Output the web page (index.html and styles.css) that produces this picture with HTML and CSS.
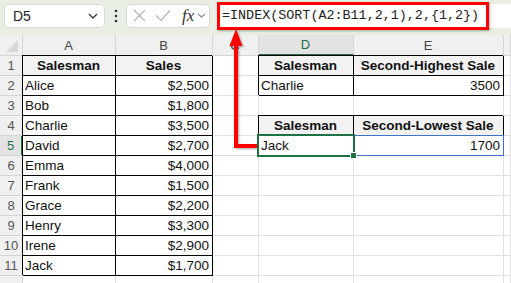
FILE: index.html
```html
<!DOCTYPE html>
<html>
<head>
    <title>Second Highest and Lowest Sale</title>
    <link rel="stylesheet" href="styles.css">
</head>
<body>

<div class="toolbar">
    <div class="name-box">
        <span>D5</span>
        <svg width="10" height="6" viewBox="0 0 10 6"><polyline points="1,1 5,5 9,1" fill="none" stroke="#333" stroke-width="1.3"/></svg>
    </div>
    <svg class="dots" width="4" height="14" viewBox="0 0 4 14"><circle cx="2" cy="2" r="1.3" fill="#333"/><circle cx="2" cy="7" r="1.3" fill="#333"/><circle cx="2" cy="12" r="1.3" fill="#333"/></svg>
    <div class="fx-buttons">
        <svg width="13" height="13" viewBox="0 0 13 13"><path d="M1 1 L12 12 M12 1 L1 12" stroke="#b4b4b4" stroke-width="1.2"/></svg>
        <svg width="16" height="13" viewBox="0 0 16 13"><polyline points="1,6.5 6,11.5 15,1.5" fill="none" stroke="#b4b4b4" stroke-width="1.2"/></svg>
        <span class="fx">fx</span>
        <svg width="9" height="5" viewBox="0 0 9 5"><polyline points="1,1 4.5,4 8,1" fill="none" stroke="#888" stroke-width="1.1"/></svg>
    </div>
    <div class="formula-bar">
        <div class="formula">=INDEX(SORT(A2:B11,2,1),2,{1,2})</div>
    </div>
</div>

<div class="sheet">
    <div class="row head">
        <div class="c corner"></div>
        <div class="c ch">A</div>
        <div class="c ch">B</div>
        <div class="c ch">C</div>
        <div class="c ch sel">D</div>
        <div class="c ch">E</div>
        <div class="c ch"></div>
    </div>
    <div class="row">
        <div class="c rh">1</div>
        <div class="c b hd">Salesman</div>
        <div class="c b hd">Sales</div>
        <div class="c"></div>
        <div class="c b hd">Salesman</div>
        <div class="c b hd">Second-Highest Sale</div>
        <div class="c"></div>
    </div>
    <div class="row">
        <div class="c rh">2</div>
        <div class="c b">Alice</div>
        <div class="c b n">$2,500</div>
        <div class="c"></div>
        <div class="c b">Charlie</div>
        <div class="c b n">3500</div>
        <div class="c"></div>
    </div>
    <div class="row">
        <div class="c rh">3</div>
        <div class="c b">Bob</div>
        <div class="c b n">$1,800</div>
        <div class="c"></div>
        <div class="c"></div>
        <div class="c"></div>
        <div class="c"></div>
    </div>
    <div class="row">
        <div class="c rh">4</div>
        <div class="c b">Charlie</div>
        <div class="c b n">$3,500</div>
        <div class="c"></div>
        <div class="c b hd">Salesman</div>
        <div class="c b hd">Second-Lowest Sale</div>
        <div class="c"></div>
    </div>
    <div class="row">
        <div class="c rh sel">5</div>
        <div class="c b">David</div>
        <div class="c b n">$2,700</div>
        <div class="c"></div>
        <div class="c b active">Jack</div>
        <div class="c b n spill">1700</div>
        <div class="c"></div>
    </div>
    <div class="row">
        <div class="c rh">6</div>
        <div class="c b">Emma</div>
        <div class="c b n">$4,000</div>
        <div class="c"></div><div class="c"></div><div class="c"></div><div class="c"></div>
    </div>
    <div class="row">
        <div class="c rh">7</div>
        <div class="c b">Frank</div>
        <div class="c b n">$1,500</div>
        <div class="c"></div><div class="c"></div><div class="c"></div><div class="c"></div>
    </div>
    <div class="row">
        <div class="c rh">8</div>
        <div class="c b">Grace</div>
        <div class="c b n">$2,200</div>
        <div class="c"></div><div class="c"></div><div class="c"></div><div class="c"></div>
    </div>
    <div class="row">
        <div class="c rh">9</div>
        <div class="c b">Henry</div>
        <div class="c b n">$3,300</div>
        <div class="c"></div><div class="c"></div><div class="c"></div><div class="c"></div>
    </div>
    <div class="row">
        <div class="c rh">10</div>
        <div class="c b">Irene</div>
        <div class="c b n">$2,900</div>
        <div class="c"></div><div class="c"></div><div class="c"></div><div class="c"></div>
    </div>
    <div class="row">
        <div class="c rh">11</div>
        <div class="c b">Jack</div>
        <div class="c b n">$1,700</div>
        <div class="c"></div><div class="c"></div><div class="c"></div><div class="c"></div>
    </div>
    <div class="row">
        <div class="c rh"></div>
        <div class="c"></div><div class="c"></div><div class="c"></div><div class="c"></div><div class="c"></div><div class="c"></div>
    </div>
</div>

<!-- callout arrow from the formula to the result cell -->
<svg class="callout" width="511" height="283" viewBox="0 0 511 283">
    <polyline points="236,44 236,146 257,146" fill="none" stroke="#ff0000" stroke-width="4"/>
    <polygon points="236,29 229.5,46 242.5,46" fill="#ff0000"/>
</svg>

</body>
</html>
```

FILE: styles.css
```css
body {
    margin: 0;
    width: 511px;
    height: 283px;
    overflow: hidden;
    position: relative;
    font-family: 'Liberation Sans', Arial, sans-serif;
    color: #111;
    background-color: #fff;
}
.toolbar {
    display: flex;
    align-items: center;
    height: 35px;
    padding: 0 0 4px 4px;
    box-sizing: border-box;
    background-color: #e8eee4;
}
.name-box {
    display: flex;
    align-items: center;
    justify-content: space-between;
    width: 101px;
    height: 24px;
    padding: 0 6px 0 8px;
    box-sizing: border-box;
    background-color: #fff;
    border: 1px solid #d6dcd2;
    border-radius: 5px;
    font-size: 14px;
    color: #222;
}
.dots {
    margin: 0 8px 0 9px;
}
.fx-buttons {
    display: flex;
    align-items: center;
    width: 84px;
    height: 24px;
    padding-left: 6px;
    box-sizing: border-box;
    background-color: #fff;
    border: 1px solid #d6dcd2;
    border-radius: 5px;
}
.fx-buttons svg:nth-child(2) {
    margin-left: 9px;
}
.fx {
    font-family: 'Liberation Serif', 'Times New Roman', serif;
    font-style: italic;
    font-size: 17px;
    color: #333;
    margin: 0 3px 0 11px;
}
.formula-bar {
    flex: 1;
    display: flex;
    align-items: center;
    height: 24px;
    margin-left: 7px;
    background-color: #fff;
    border-radius: 5px 0 0 5px;
}
.formula {
    width: 272px;
    height: 28px;
    margin: -2px 0;
    box-sizing: border-box;
    border: 3px solid #ff0000;
    padding: 0 0 0 2px;
    font-family: 'Liberation Mono', 'Courier New', monospace;
    font-size: 13.4px;
    line-height: 22px;
    color: #222;
    box-shadow: 1px 1px 2px rgba(0, 0, 0, 0.3);
}
.row {
    display: grid;
    grid-template-columns: 23px 93px 97px 46px 95px 150px 1fr;
    height: 20px;
}
.row.head {
    height: 21px;
}
.c {
    display: flex;
    align-items: center;
    padding: 0 3px 0 2px;
    border-right: 1px solid #e1e1e1;
    border-bottom: 1px solid #e1e1e1;
    font-size: 13.5px;
    white-space: nowrap;
    position: relative;
}
.ch {
    justify-content: center;
    background-color: #f0f0f0;
    border-color: #d5d5d5;
    color: #444;
    font-size: 13px;
}
.ch.sel {
    background-color: #e3e3e3;
    color: #1e7145;
    border-bottom: 2px solid #1e7145;
}
.corner {
    background-color: #f0f0f0;
    border-color: #d5d5d5;
}
.corner::after {
    content: '';
    position: absolute;
    right: 4px;
    bottom: 3px;
    border-left: 12px solid transparent;
    border-bottom: 12px solid #d8d8d8;
}
.rh {
    justify-content: center;
    padding: 0;
    background-color: #f0f0f0;
    border-color: #d5d5d5;
    color: #555;
    font-size: 13px;
}
.rh.sel {
    background-color: #e3e3e3;
    color: #1e7145;
    border-right: 2px solid #1e7145;
}
.b {
    border-color: #000;
    box-shadow: -1px -1px 0 #000;
}
.hd {
    justify-content: center;
    font-weight: bold;
    background-color: #f2f2f2;
}
.n {
    justify-content: flex-end;
}
.spill::after {
    content: '';
    position: absolute;
    top: -1px;
    left: 0;
    right: -1px;
    bottom: -1px;
    border: 1px solid #3f72c9;
    border-left: none;
}
.active::after {
    content: '';
    position: absolute;
    top: -2px;
    left: -2px;
    right: -2px;
    bottom: -2px;
    border: 2px solid #1e7145;
    z-index: 2;
}
.active::before {
    content: '';
    position: absolute;
    right: -4px;
    bottom: -4px;
    width: 5px;
    height: 5px;
    background-color: #1e7145;
    border: 1px solid #fff;
    z-index: 3;
}
.callout {
    position: absolute;
    top: 0;
    left: 0;
    pointer-events: none;
    filter: drop-shadow(1px 1px 1px rgba(0, 0, 0, 0.35));
}
```
